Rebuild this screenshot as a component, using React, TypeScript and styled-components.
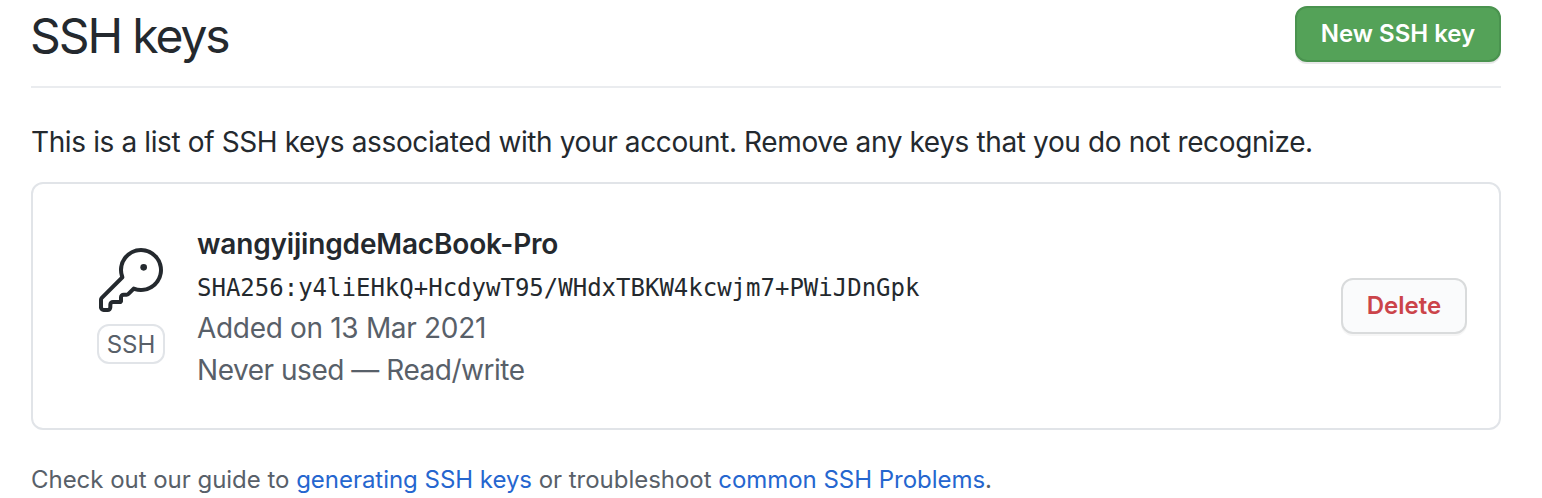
import React from "react";
import styled, { createGlobalStyle } from "styled-components";

const GlobalStyle = createGlobalStyle`
  *, *::before, *::after { box-sizing: border-box; }
  body {
    margin: 0;
    background: #fff;
    color: #24292e;
    font-family: Inter, "Liberation Sans", sans-serif;
    overflow: hidden;
  }
`;

const Page = styled.main`
  height: 498px;
  padding: 6px 41px 0 31px;
  overflow: hidden;
`;

const Header = styled.header`
  display: flex;
  justify-content: space-between;
  align-items: flex-start;
  height: 82px;
  border-bottom: 2px solid #eaecef;
`;

const Title = styled.h1`
  margin: 0 0 0 -1px;
  font-size: 48px;
  font-weight: 400;
  line-height: 60px;
  letter-spacing: -2.1px;
  white-space: nowrap;
`;

const Button = styled.button<{ $primary?: boolean }>`
  display: flex;
  align-items: center;
  justify-content: center;
  flex: none;
  width: ${(p) => (p.$primary ? 206 : 126)}px;
  height: 56px;
  padding: 0;
  border: 2px solid ${(p) => (p.$primary ? "#4a934f" : "#d9dbdc")};
  border-radius: 12px;
  background: ${(p) => (p.$primary ? "#54a258" : "#fafbfc")};
  color: ${(p) => (p.$primary ? "#fff" : "#cb444a")};
  box-shadow: 0 2px 0 rgba(27, 31, 35, ${(p) => (p.$primary ? 0.1 : 0.04)});
  font: 600 24px/36px Inter, sans-serif;
  white-space: nowrap;
`;

const Intro = styled.p`
  margin: 33px 0 19px;
  font-size: 28px;
  line-height: 42px;
  letter-spacing: -0.38px;
  white-space: nowrap;
`;

const KeyCard = styled.section`
  display: flex;
  align-items: center;
  height: 248px;
  padding: 0 32px 0 64px;
  border: 2px solid #e1e4e8;
  border-radius: 12px;
`;

const KeyType = styled.div`
  display: flex;
  flex-direction: column;
  align-items: center;
  width: 68px;
  gap: 12px;
`;

const KeyIcon = styled.svg`
  display: block;
  width: 64px;
  height: 64px;
  fill: #24292e;
`;

const Badge = styled.span`
  display: flex;
  align-items: center;
  justify-content: center;
  width: 68px;
  height: 40px;
  border: 2px solid #e1e4e8;
  border-radius: 12px;
  color: #586069;
  font-size: 24px;
`;

const Details = styled.div`
  flex: 1;
  margin: 2px 0 0 32px;
  color: #586069;
  font-size: 28px;
  line-height: 42px;
  white-space: nowrap;
`;

const KeyName = styled.strong`
  display: block;
  color: #24292e;
  font-weight: 600;
  letter-spacing: -0.17px;
`;

const Fingerprint = styled.code`
  display: block;
  height: 42px;
  color: #24292e;
  font: 24px/46px "DejaVu Sans Mono", monospace;
`;

const Meta = styled.span<{ $tight?: boolean }>`
  display: block;
  letter-spacing: ${(p) => (p.$tight ? -0.47 : -0.32)}px;
`;

const Guide = styled.p`
  margin: 32px 0 0;
  color: #586069;
  font-size: 24px;
  line-height: 36px;
  letter-spacing: -0.03px;
  white-space: nowrap;
`;

const Link = styled.a`
  color: #2566cf;
  text-decoration: none;
`;

export default function App() {
  return (
    <>
      <GlobalStyle />
      <Page>
        <Header>
          <Title>SSH keys</Title>
          <Button $primary>New SSH key</Button>
        </Header>
        <Intro>
          This is a list of SSH keys associated with your account. Remove any keys that you do not recognize.
        </Intro>
        <KeyCard>
          <KeyType>
            <KeyIcon viewBox="0 0 24 24" aria-hidden="true">
              <path d="M16.75 8.5a1.25 1.25 0 1 0 0-2.5 1.25 1.25 0 0 0 0 2.5z" />
              <path
                fillRule="evenodd"
                d="M15.75 0a8.25 8.25 0 0 0-7.851 10.79L.513 18.178A1.75 1.75 0 0 0 0 19.414v2.836C0 23.217.784 24 1.75 24h1.5A1.75 1.75 0 0 0 5 22.25v-1a.25.25 0 0 1 .25-.25h2.735a.75.75 0 0 0 .545-.22l.214-.213A.875.875 0 0 0 9 19.948V18.5a.25.25 0 0 1 .25-.25h1.086c.464 0 .91-.184 1.237-.513l1.636-1.636A8.25 8.25 0 1 0 15.75 0zM9 8.25a6.75 6.75 0 1 1 4.288 6.287.75.75 0 0 0-.804.168l-1.971 1.972a.25.25 0 0 1-.177.073H9.25A1.75 1.75 0 0 0 7.5 18.5v1H5.25a1.75 1.75 0 0 0-1.75 1.75v1a.25.25 0 0 1-.25.25h-1.5a.25.25 0 0 1-.25-.25v-2.836a.25.25 0 0 1 .073-.177l7.722-7.721a.75.75 0 0 0 .168-.804A6.73 6.73 0 0 1 9 8.25z"
              />
            </KeyIcon>
            <Badge>SSH</Badge>
          </KeyType>
          <Details>
            <KeyName>wangyijingdeMacBook-Pro</KeyName>
            <Fingerprint>SHA256:y4liEHkQ+HcdywT95/WHdxTBKW4kcwjm7+PWiJDnGpk</Fingerprint>
            <Meta>Added on 13 Mar 2021</Meta>
            <Meta $tight>Never used — Read/write</Meta>
          </Details>
          <Button>Delete</Button>
        </KeyCard>
        <Guide>
          Check out our guide to <Link>generating SSH keys</Link> or troubleshoot <Link>common SSH Problems</Link>.
        </Guide>
      </Page>
    </>
  );
}
